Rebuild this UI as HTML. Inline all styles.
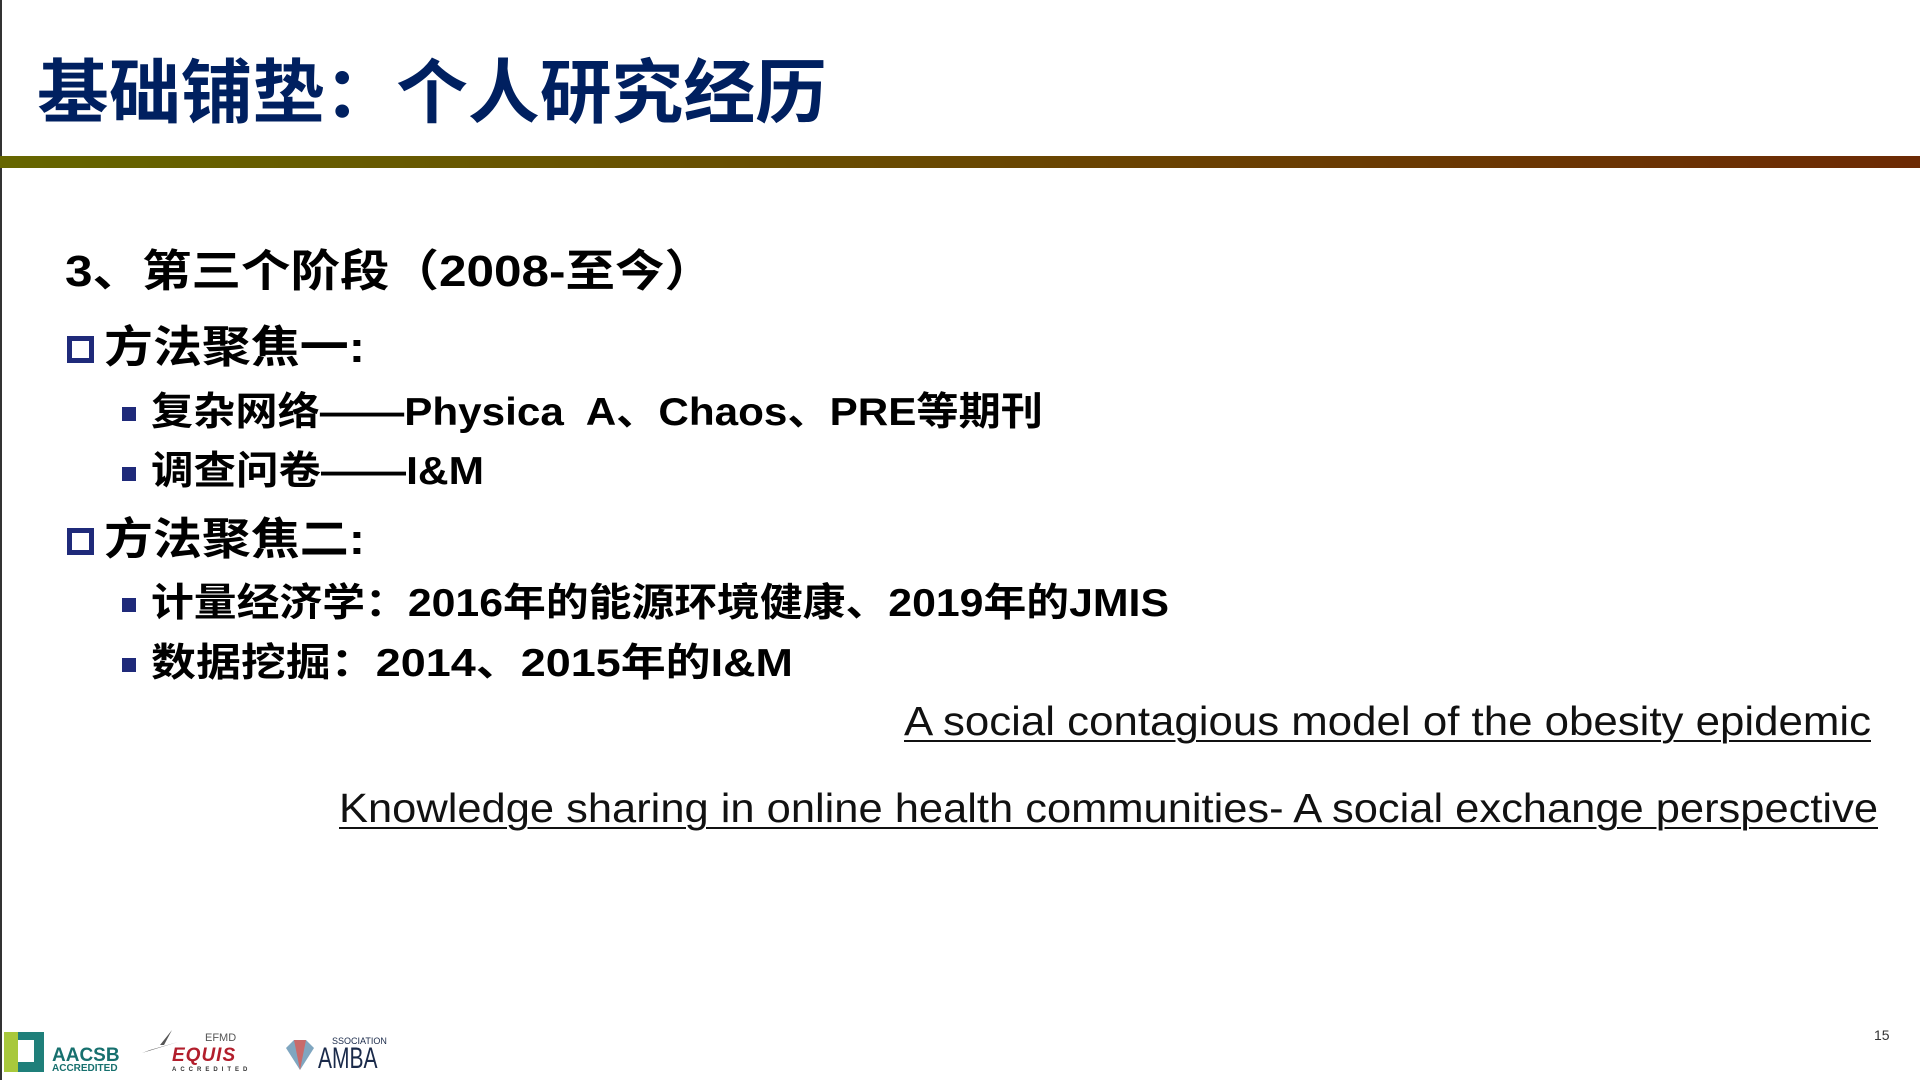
<!DOCTYPE html>
<html><head><meta charset="utf-8"><style>
html,body{margin:0;padding:0;}
body{width:1920px;height:1080px;position:relative;overflow:hidden;background:#fff;font-family:"Liberation Sans","Noto Sans CJK SC",sans-serif;}
.l{position:absolute;white-space:nowrap;transform-origin:0 50%;line-height:1;}
.b{font-weight:bold;color:#000;}
#bar{position:absolute;left:0;top:156px;width:1920px;height:12px;background:linear-gradient(90deg,#666600,#6c2a04);}
#vl{position:absolute;left:0;top:0;width:2px;height:1080px;background:#333;}
.cb{position:absolute;width:17px;height:17px;border:5px solid #1f2a7a;box-sizing:content-box;}
.sq{position:absolute;width:14px;height:14px;background:#1f2a7a;}
.lk{font-weight:normal;color:#111;text-decoration:underline;text-decoration-thickness:2px;text-underline-offset:5px;}
</style></head><body>
<div id="vl"></div>
<div class="l b" id="t" style="left:37px;top:58px;font-size:70px;color:#002060;">基础铺垫：个人研究经历</div>
<div id="bar"></div>
<div class="l b" id="a" style="left:65px;top:250px;font-size:44px;">3、第三个阶段（2008-至今）</div>
<div class="cb" style="left:67px;top:336px;"></div>
<div class="l b" id="c" style="left:104px;top:326px;font-size:44px;">方法聚焦一:</div>
<div class="sq" style="left:122px;top:407px;"></div>
<div class="l b" id="d" style="left:151px;top:393px;font-size:39px;">复杂网络——Physica&nbsp; A、Chaos、PRE等期刊</div>
<div class="sq" style="left:122px;top:467px;"></div>
<div class="l b" id="e" style="left:151px;top:452px;font-size:39px;">调查问卷——I&amp;M</div>
<div class="cb" style="left:67px;top:528px;"></div>
<div class="l b" id="f" style="left:104px;top:518px;font-size:44px;">方法聚焦二:</div>
<div class="sq" style="left:122px;top:598px;"></div>
<div class="l b" id="g" style="left:151px;top:584px;font-size:39px;">计量经济学：2016年的能源环境健康、2019年的JMIS</div>
<div class="sq" style="left:122px;top:658px;"></div>
<div class="l b" id="h" style="left:151px;top:644px;font-size:39px;">数据挖掘：2014、2015年的I&amp;M</div>
<div class="l lk" id="i" style="left:904px;top:701px;font-size:41px;">A social contagious model of the obesity epidemic</div>
<div class="l lk" id="j" style="left:339px;top:788px;font-size:41px;">Knowledge sharing in online health communities- A social exchange perspective</div>
<div class="l" style="left:1874px;top:1028px;font-size:14px;color:#333;">15</div>
<!-- logos -->
<div style="position:absolute;left:4px;top:1032px;width:40px;height:40px;background:#1f7f7a;"></div>
<div style="position:absolute;left:12px;top:1040px;width:22px;height:22px;background:#fff;"></div>
<div style="position:absolute;left:4px;top:1032px;width:14px;height:40px;background:#a8c83c;"></div>
<div class="l" style="left:52px;top:1046px;font-size:19px;font-weight:bold;color:#17706e;">AACSB</div>
<div class="l" style="left:52px;top:1064px;font-size:10px;font-weight:bold;color:#17706e;">ACCREDITED</div>
<svg style="position:absolute;left:140px;top:1028px" width="40" height="30"><path d="M2 25 L38 14 L10 22Z M20 17 L32 2 L24 17Z" fill="#555"/></svg>
<div class="l" style="left:205px;top:1033px;font-size:11px;color:#555;">EFMD</div>
<div class="l" style="left:172px;top:1046px;font-size:19px;font-weight:bold;font-style:italic;color:#b21e2c;letter-spacing:1px;">EQUIS</div>
<div class="l" style="left:172px;top:1067px;font-size:6px;font-weight:bold;color:#333;letter-spacing:4px;">ACCREDITED</div>
<svg style="position:absolute;left:284px;top:1038px" width="32" height="34"><path d="M2 10 L10 2 L22 2 L30 10 L16 32Z" fill="#7fa6c0"/><path d="M10 2 L16 32 L22 2Z" fill="#c86a6a"/></svg>
<div class="l" style="left:318px;top:1044px;font-size:30px;color:#1a2a4a;transform:scaleX(0.7);">AMBA</div>
<div class="l" style="left:332px;top:1037px;font-size:9px;color:#1a2a4a;">SSOCIATION</div>
<script>
var W={t:790,a:649,c:261,d:892,e:333,f:261,g:1018,h:642,i:967,j:1539};
for(var k in W){var el=document.getElementById(k);var w=el.getBoundingClientRect().width;if(w>0)el.style.transform='scaleX('+(W[k]/w)+')';}
</script>
</body></html>
